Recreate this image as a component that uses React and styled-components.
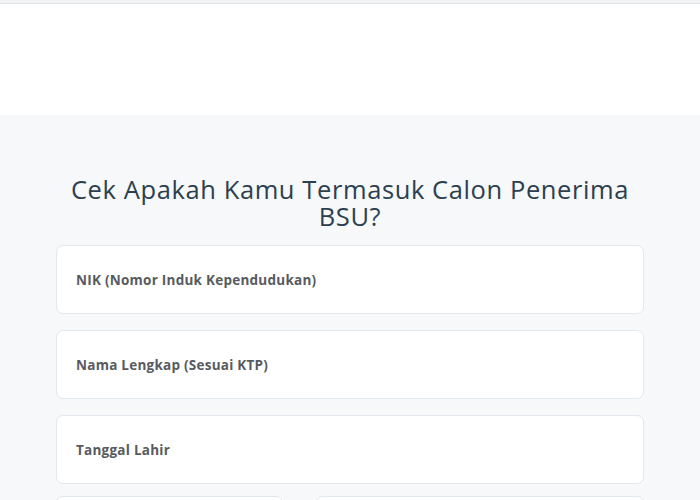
import styled, { createGlobalStyle } from "styled-components";

const Global = createGlobalStyle`
  body {
    margin: 0;
    background: #f6f8fa;
    font-family: "Open Sans", "Lato", sans-serif;
  }
`;

const TopStrip = styled.div`
  height: 3px;
  background: #f2f3f5;
  border-bottom: 1px solid #e1e3e6;
`;

const Header = styled.header`
  height: 111px;
  background: #fff;
`;

const Section = styled.main`
  background: #f6f8fa;
  padding: 61px 56px 0;
  display: flex;
  flex-direction: column;
  align-items: center;
`;

const Title = styled.h1`
  margin: 0 0 15px;
  max-width: 600px;
  font-size: 25.5px;
  line-height: 27px;
  font-weight: 400;
  letter-spacing: 0.6px;
  color: #2d3f4f;
  text-align: center;
`;

const Form = styled.div`
  width: 588px;
  display: flex;
  flex-direction: column;
  gap: 16px;
`;

const Field = styled.div`
  height: 69px;
  box-sizing: border-box;
  background: #fff;
  border: 1px solid #e2e8ee;
  border-radius: 7px;
  display: flex;
  align-items: center;
  padding: 0 19px;
`;

const Label = styled.span`
  font-size: 13.5px;
  font-weight: 700;
  color: #575b60;
  letter-spacing: 0.25px;
`;

const Row = styled.div`
  display: grid;
  grid-template-columns: 227px 1fr;
  gap: 33px;
  margin-top: -4px;
`;

const fields = [
  "NIK (Nomor Induk Kependudukan)",
  "Nama Lengkap (Sesuai KTP)",
  "Tanggal Lahir",
];

export default function App() {
  return (
    <>
      <Global />
      <TopStrip />
      <Header />
      <Section>
        <Title>Cek Apakah Kamu Termasuk Calon Penerima BSU?</Title>
        <Form>
          {fields.map((f) => (
            <Field key={f}>
              <Label>{f}</Label>
            </Field>
          ))}
          <Row>
            <Field />
            <Field />
          </Row>
        </Form>
      </Section>
    </>
  );
}
